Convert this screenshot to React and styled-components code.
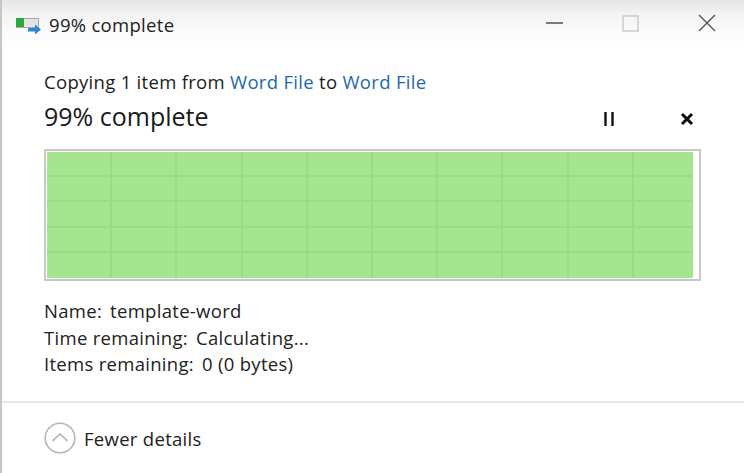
import React from "react";
import styled, { createGlobalStyle } from "styled-components";

const Global = createGlobalStyle`
  html, body {
    margin: 0;
    padding: 0;
    background: #fff;
  }
  body {
    font-family: "Open Sans", "Noto Sans", sans-serif;
    color: #1c1c1c;
    overflow: hidden;
  }
`;

const Window = styled.div`
  width: 744px;
  height: 473px;
  box-sizing: border-box;
  border-left: 2px solid #c6c6c6;
  display: flex;
  flex-direction: column;
  background: #fff;
`;

const TitleBar = styled.div`
  height: 50px;
  flex: none;
  display: flex;
  align-items: center;
  padding-left: 13px;
  background: linear-gradient(#e6e6e6 0, #f3f3f3 14px, #fbfbfb 32px, #fff 48px);
`;

const TitleText = styled.span`
  font-size: 18.5px;
  margin: 0 0 2px 8px;
  letter-spacing: 0.3px;
  color: #222;
`;

const WindowControls = styled.div`
  margin-left: auto;
  display: flex;
  align-items: center;
  padding: 0 28px 4px 0;
  gap: 59px;
`;

const Body = styled.div`
  flex: 1;
  padding: 20px 43px 0 42px;
  display: flex;
  flex-direction: column;
`;

const CopyLine = styled.div`
  font-size: 18.5px;
  line-height: 24px;
  letter-spacing: 0.3px;
`;

const Link = styled.span`
  color: #1f67b1;
`;

const StatusRow = styled.div`
  display: flex;
  align-items: center;
  height: 36px;
  margin-top: 4px;
`;

const Heading = styled.div`
  font-size: 25px;
  color: #1a1a1a;
`;

const Actions = styled.div`
  margin-left: auto;
  display: flex;
  align-items: center;
  gap: 65px;
  padding: 6px 7px 0 0;
`;

const Graph = styled.div`
  margin-top: 15px;
  height: 132px;
  box-sizing: border-box;
  border: 2px solid #c8c8c8;
  padding: 1px 6px 1px 1px;
  background: #fff;
  display: flex;
`;

const Fill = styled.div`
  flex: 1;
  display: grid;
  grid-template-columns: repeat(9, 65.2px) 1fr;
  grid-template-rows: 25px 25px 26px 25px 25px;
  background: #a6e58f;
`;

const Cell = styled.div`
  box-sizing: border-box;
  border-right: ${({ $last }) => ($last ? "0" : "2px solid #99dc87")};
  border-bottom: ${({ $bottom }) => ($bottom ? "0" : "2px solid #99dc87")};
`;

const Details = styled.div`
  margin-top: 17px;
  font-size: 18.5px;
  line-height: 26.5px;
  letter-spacing: 0.3px;
  color: #222;
`;

const Value = styled.span`
  margin-left: 8px;
`;

const Footer = styled.div`
  height: 72px;
  flex: none;
  box-sizing: border-box;
  padding-left: 42px;
  border-top: 2px solid #e6e6e6;
  display: flex;
  align-items: center;
  gap: 8px;
`;

const FooterLabel = styled.span`
  font-size: 18.5px;
  letter-spacing: 0.3px;
  color: #222;
`;

const CopyIcon = () => (
  <svg width="26" height="20" viewBox="0 0 26 20">
    <rect x="1.5" y="3.5" width="22" height="9" fill="#e4e4e4" stroke="#a8a8a8" />
    <rect x="1" y="3" width="8" height="9" fill="#2eaa3c" />
    <path d="M13 13h7V9.5l6 5-6 5v-3h-7z" fill="#2f86d6" />
  </svg>
);

const Minimize = () => (
  <svg width="17" height="4" viewBox="0 0 17 4">
    <path d="M0 2h17" stroke="#444" strokeWidth="1.4" />
  </svg>
);

const Maximize = () => (
  <svg width="17" height="17" viewBox="0 0 17 17">
    <rect x="1" y="1" width="15" height="15" fill="none" stroke="#cfcfcf" strokeWidth="1.6" />
  </svg>
);

const Close = () => (
  <svg width="18" height="18" viewBox="0 0 18 18">
    <path d="M1 1l16 16M17 1L1 17" stroke="#555" strokeWidth="1.4" />
  </svg>
);

const Pause = () => (
  <svg width="12" height="14" viewBox="0 0 12 14">
    <path d="M2.5 0v14M9.5 0v14" stroke="#111" strokeWidth="2.4" />
  </svg>
);

const Cancel = () => (
  <svg width="14" height="14" viewBox="0 0 14 14">
    <path d="M2 2l10 10M12 2L2 12" stroke="#0c0c0c" strokeWidth="3" />
  </svg>
);

const Chevron = () => (
  <svg width="32" height="32" viewBox="0 0 32 32">
    <circle cx="16" cy="16" r="14.8" fill="none" stroke="#b4b4b4" strokeWidth="1.6" />
    <path d="M8.5 19l7.5-7 7.5 7" fill="none" stroke="#b0b0b0" strokeWidth="1.6" />
  </svg>
);

const cells = Array.from({ length: 50 }, (_, i) => i);

const App = () => (
  <Window>
    <Global />
    <TitleBar>
      <CopyIcon />
      <TitleText>99% complete</TitleText>
      <WindowControls>
        <Minimize />
        <Maximize />
        <Close />
      </WindowControls>
    </TitleBar>
    <Body>
      <CopyLine>
        Copying 1 item from <Link>Word File</Link> to <Link>Word File</Link>
      </CopyLine>
      <StatusRow>
        <Heading>99% complete</Heading>
        <Actions>
          <Pause />
          <Cancel />
        </Actions>
      </StatusRow>
      <Graph>
        <Fill>
          {cells.map((i) => (
            <Cell key={i} $last={i % 10 === 9} $bottom={i >= 40} />
          ))}
        </Fill>
      </Graph>
      <Details>
        <div>
          Name:<Value>template-word</Value>
        </div>
        <div>
          Time remaining:<Value>Calculating...</Value>
        </div>
        <div>
          Items remaining:<Value>0 (0 bytes)</Value>
        </div>
      </Details>
    </Body>
    <Footer>
      <Chevron />
      <FooterLabel>Fewer details</FooterLabel>
    </Footer>
  </Window>
);

export default App;
